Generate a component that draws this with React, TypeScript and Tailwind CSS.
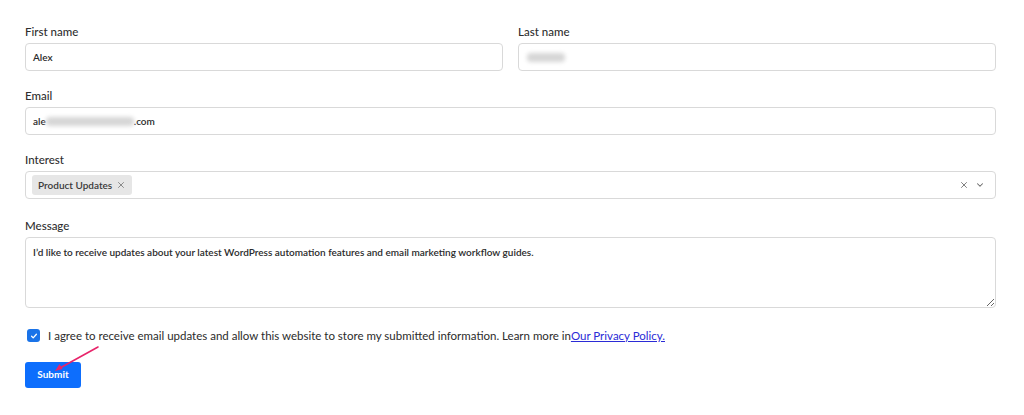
import { ChevronDown, X } from "lucide-react";

const font = { fontFamily: "Lato, 'Noto Sans', sans-serif" };

function Label({ children }: { children: React.ReactNode }) {
  return <div className="mb-[4px] text-[11.5px] font-medium leading-[14px] text-[#2f2f2f]">{children}</div>;
}

function Blur({ w }: { w: number }) {
  return (
    <span
      className="inline-block h-[9px] rounded-sm bg-[#d6d6d6] blur-[2px] align-middle"
      style={{ width: w }}
    />
  );
}

export default function App() {
  return (
    <div className="relative h-[415px] w-[1024px] bg-white text-[#2b2b2b]" style={font}>
      <form className="flex flex-col pl-[25px] pr-[28px] pt-[25px]">
        <div className="grid grid-cols-2 gap-[15px]">
          <div>
            <Label>First name</Label>
            <div className="flex h-[28px] items-center rounded-[4px] border border-[#d9d9d9] px-[7px] text-[10px] font-semibold">
              Alex
            </div>
          </div>
          <div>
            <Label>Last name</Label>
            <div className="flex h-[28px] items-center rounded-[4px] border border-[#d9d9d9] px-[8px]">
              <Blur w={38} />
            </div>
          </div>
        </div>

        <div className="mt-[18px]">
          <Label>Email</Label>
          <div className="flex h-[28px] items-center rounded-[4px] border border-[#d9d9d9] px-[7px] text-[10px] font-semibold">
            <span>ale</span>
            <Blur w={88} />
            <span>.com</span>
          </div>
        </div>

        <div className="mt-[18px]">
          <Label>Interest</Label>
          <div className="flex h-[28px] items-center rounded-[4px] border border-[#d9d9d9] pl-[6px] pr-[10px]">
            <span className="flex h-[20px] items-center gap-[4px] rounded-[3px] bg-[#e6e6e6] pl-[6px] pr-[6px] text-[10px] font-semibold text-[#3a3a3a]">
              Product Updates
              <X size={10} strokeWidth={2} className="text-[#777]" />
            </span>
            <span className="ml-auto flex items-center gap-[6px] text-[#666]">
              <X size={10} strokeWidth={2} />
              <ChevronDown size={10} strokeWidth={2.5} />
            </span>
          </div>
        </div>

        <div className="mt-[20px]">
          <Label>Message</Label>
          <textarea
            readOnly
            className="block h-[71px] w-full resize-y rounded-[4px] border border-[#d9d9d9] px-[7px] py-[7px] text-[10px] font-semibold text-[#2b2b2b] outline-none"
            defaultValue="I’d like to receive updates about your latest WordPress automation features and email marketing workflow guides."
          />
        </div>

        <label className="mt-[19px] flex items-center gap-[8px] pl-[2px] text-[11.5px] text-[#2b2b2b]">
          <span className="flex h-[13px] w-[13px] items-center justify-center rounded-[3px] bg-[#1a73e8]">
            <svg width="8" height="8" viewBox="0 0 10 10" fill="none" stroke="white" strokeWidth="1.6" strokeLinecap="round" strokeLinejoin="round">
              <path d="M2 5.3l2 2L8 2.8" />
            </svg>
          </span>
          <span>
            I agree to receive email updates and allow this website to store my submitted information. Learn more in
            <a className="text-[#2b2bd6] underline">Our Privacy Policy.</a>
          </span>
        </label>

        <div className="mt-[16px]">
          <button
            type="button"
            className="h-[26px] w-[56px] rounded-[3px] bg-[#0d6efd] text-[10px] font-bold text-white"
          >
            Submit
          </button>
        </div>
      </form>

      <svg className="pointer-events-none absolute left-0 top-0" width="140" height="400">
        <line x1="98" y1="347" x2="60" y2="368" stroke="#e8246a" strokeWidth="1.6" strokeLinecap="round" />
        <path d="M55 371l4.5-7 3 5z" fill="#e8246a" />
      </svg>
    </div>
  );
}
